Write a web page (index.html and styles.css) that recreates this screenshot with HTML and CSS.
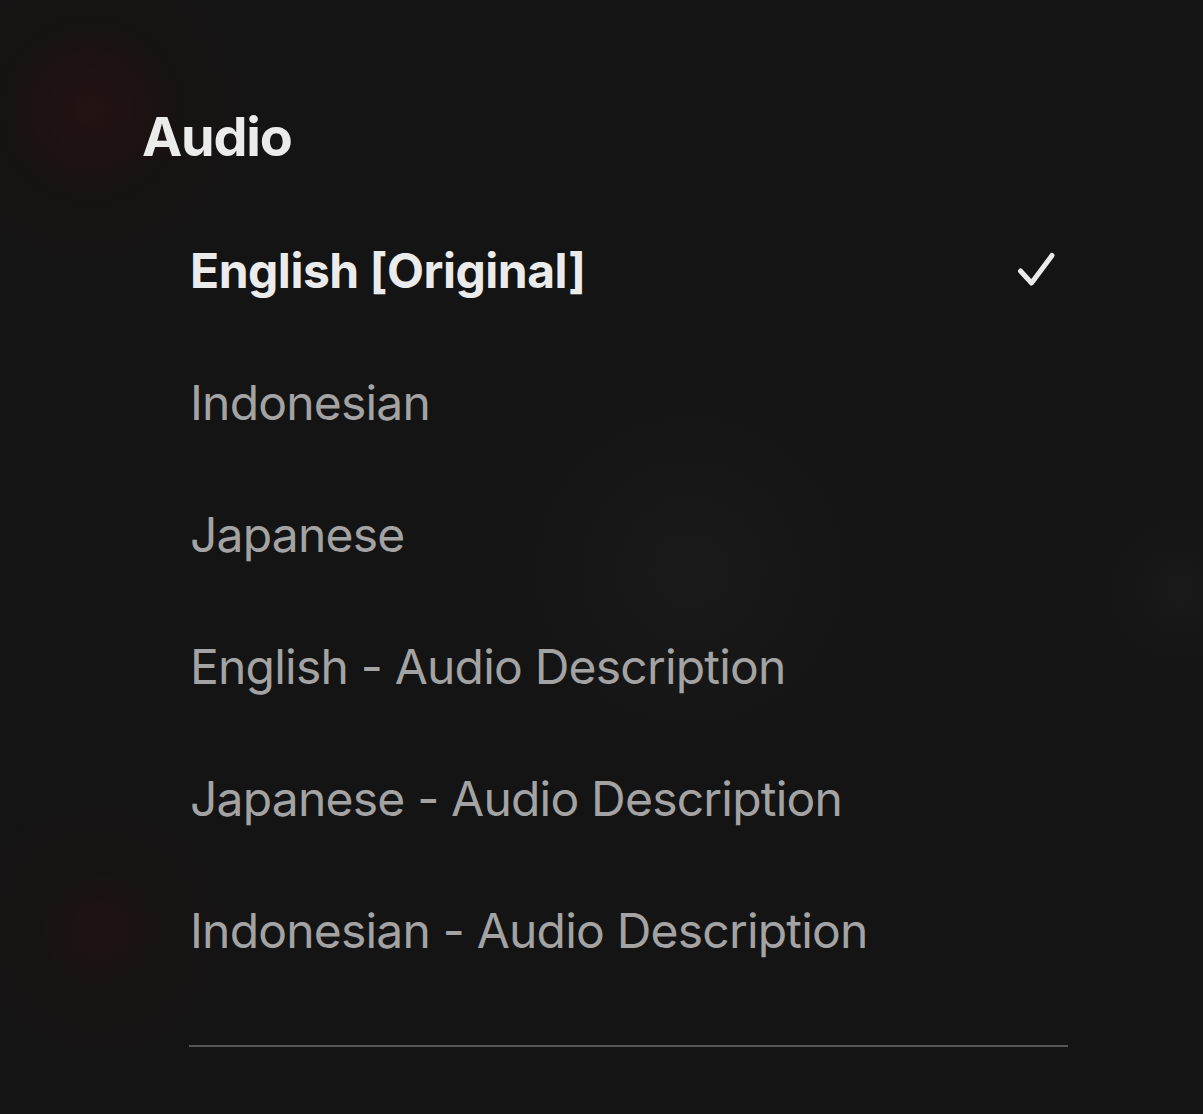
FILE: index.html
```html
<!DOCTYPE html>
<html lang="en">
<head>
<meta charset="utf-8">
<title>Audio</title>
<link rel="stylesheet" href="styles.css">
</head>
<body>
<div class="panel">
  <h2 class="title">Audio</h2>
  <ul class="options">
    <li class="option active">
      <span class="label">English [Original]</span>
      <svg class="check" width="40" height="40" viewBox="0 0 40 40" aria-hidden="true">
        <path d="M4.5 19 L15.5 31 L36 3.5" fill="none" stroke="#ebebeb" stroke-width="5" stroke-linecap="round" stroke-linejoin="round"/>
      </svg>
    </li>
    <li class="option"><span class="label">Indonesian</span></li>
    <li class="option"><span class="label">Japanese</span></li>
    <li class="option"><span class="label">English - Audio Description</span></li>
    <li class="option"><span class="label">Japanese - Audio Description</span></li>
    <li class="option"><span class="label">Indonesian - Audio Description</span></li>
  </ul>
  <div class="divider"></div>
</div>
</body>
</html>
```
FILE: styles.css
```css
html, body {
  margin: 0;
  padding: 0;
}
body {
  width: 1203px;
  height: 1114px;
  overflow: hidden;
  background-color: #141414;
  background-image:
    radial-gradient(circle at 90px 110px, rgba(42, 18, 18, 0.75) 0, rgba(30, 16, 16, 0.4) 80px, rgba(20, 20, 20, 0) 170px),
    radial-gradient(circle at 100px 930px, rgba(38, 18, 18, 0.6) 0, rgba(28, 16, 16, 0.3) 70px, rgba(20, 20, 20, 0) 150px),
    radial-gradient(circle at 690px 570px, rgba(25, 25, 25, 1) 0, rgba(22, 22, 22, 1) 140px, rgba(20, 20, 20, 0) 170px),
    radial-gradient(circle at 1180px 590px, rgba(25, 25, 25, 1) 0, rgba(20, 20, 20, 0) 90px);
  font-family: Inter, "Noto Sans", sans-serif;
  color: #e6e6e6;
}
.panel {
  padding: 110px 0 0 142px;
  width: 926px;
}
.title {
  margin: 0 0 41px 0;
  font-size: 54px;
  line-height: 54px;
  font-weight: 700;
  letter-spacing: -1.2px;
  color: #ebebeb;
}
.options {
  list-style: none;
  margin: 0 0 0 48px;
  padding: 0;
}
.option {
  display: flex;
  align-items: center;
  justify-content: space-between;
  height: 132px;
  font-size: 48px;
  line-height: 132px;
  font-weight: 400;
  letter-spacing: -0.8px;
  color: #a3a3a3;
  padding-right: 12px;
}
.option.active {
  font-weight: 700;
  letter-spacing: -0.5px;
  color: #ebebeb;
}
.check {
  display: block;
  margin-top: 2px;
}
.divider {
  margin: 48px 0 0 47px;
  height: 2px;
  width: 879px;
  background: #575757;
}
```
